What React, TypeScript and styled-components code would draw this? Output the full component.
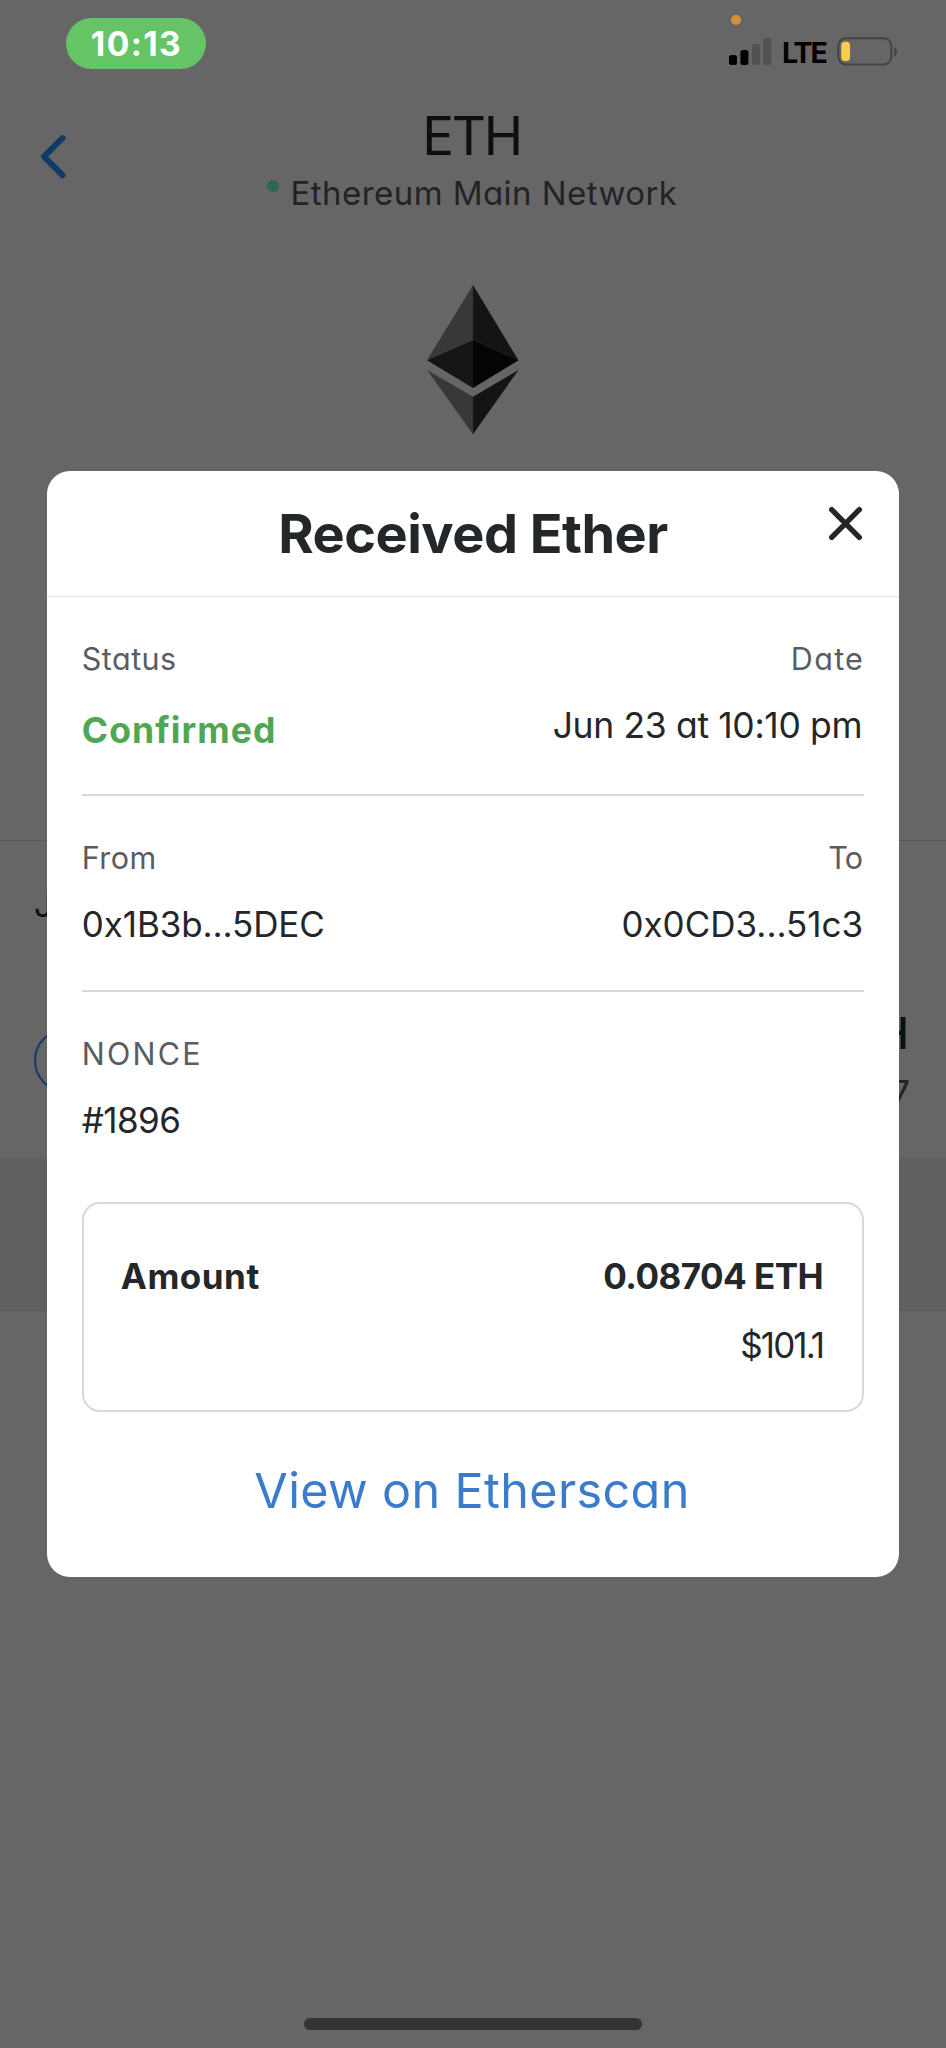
import React from "react";
import styled, { createGlobalStyle } from "styled-components";

const GlobalStyle = createGlobalStyle`
  * { box-sizing: border-box; }
  body {
    margin: 0;
    background: #fff;
    font-family: Inter, "Liberation Sans", sans-serif;
    font-feature-settings: "cv11";
    color: #24272a;
  }
  svg { display: block; flex: none; }
`;

const Screen = styled.div`
  position: relative;
  width: 946px;
  height: 2048px;
  overflow: hidden;
  background: #fff;
`;

/* status bar */
const StatusBar = styled.header`
  position: relative;
  z-index: 2;
  display: flex;
  justify-content: space-between;
  height: 100px;
  padding: 18px 48px 0 66px;
`;

const TimePill = styled.div`
  width: 140px;
  height: 51px;
  border-radius: 26px;
  background: #65c466;
  color: #fff;
  font-size: 33.5px;
  font-weight: 650;
  line-height: 52px;
  letter-spacing: 1.4px;
  text-indent: 1px;
  text-align: center;
`;

const StatusIcons = styled.div`
  position: relative;
  display: flex;
  align-items: flex-start;
  padding-top: 19px;
`;

const RecordingDot = styled.span`
  position: absolute;
  top: -3px;
  left: 2px;
  width: 10px;
  height: 10px;
  border-radius: 50%;
  background: #d9903b;
`;

const Carrier = styled.span`
  width: 55px;
  margin: 1px 0 0 10px;
  color: #000;
  font-size: 28.5px;
  font-weight: 700;
  line-height: 30px;
  letter-spacing: -2px;
`;

/* wallet page */
const NavBar = styled.nav`
  display: grid;
  grid-template-columns: 120px 1fr 120px;
  height: 120px;
  padding-top: 4px;
`;

const BackButton = styled.div`
  padding: 28px 0 0 37px;
`;

const NavTitle = styled.div`
  display: flex;
  flex-direction: column;
  align-items: center;
  padding-right: 2px;
`;

const TokenName = styled.h1`
  margin: 0;
  padding-right: 1px;
  font-size: 53px;
  font-weight: 400;
  line-height: 65px;
  letter-spacing: -2.4px;
`;

const NetworkRow = styled.div`
  display: flex;
  align-items: flex-start;
  gap: 12px;
  color: #535a61;
  font-size: 33px;
  line-height: 49px;
  letter-spacing: 0.44px;
`;

const NetworkDot = styled.span`
  width: 12px;
  height: 12px;
  margin-top: 11px;
  border-radius: 50%;
  background: #70ffd2;
`;

const TokenHero = styled.section`
  display: flex;
  justify-content: center;
  height: 621px;
  padding: 65px 0 0;
  border-bottom: 1px solid #d6d9dc;
`;

const Activity = styled.section`
  height: 317px;
  padding: 44px 37px 0 34px;
`;

const ActivityDate = styled.div`
  font-size: 33px;
  line-height: 40px;
`;

const ActivityRow = styled.div`
  display: flex;
  justify-content: space-between;
  margin-top: 83px;
`;

const ActivityIcon = styled.div`
  width: 65px;
  height: 65px;
  margin-top: 20px;
  border: 2px solid #2b91ff;
  border-radius: 50%;
`;

const ActivityAmount = styled.div`
  text-align: right;
  font-size: 43.5px;
  font-weight: 500;
  line-height: 50px;
`;

const ActivityFiat = styled.div`
  margin-right: -1px;
  color: #535a61;
  font-size: 35px;
  line-height: 70px;
  text-align: right;
`;

const Separator = styled.div`
  height: 153px;
  border-bottom: 1px solid #d6d9dc;
  background: #f0f0f6;
`;

/* transaction dialog */
const Backdrop = styled.div`
  position: absolute;
  inset: 0;
  z-index: 1;
  padding: 471px 47.3px 0;
  background: rgba(0, 0, 0, 0.6);
`;

const Dialog = styled.div`
  height: 1106px;
  overflow: hidden;
  border-radius: 23px;
  background: #fff;
`;

const DialogHeader = styled.div`
  display: grid;
  grid-template-columns: 80px 1fr 80px;
  height: 126px;
  border-bottom: 1px solid #dfe0e3;
`;

const DialogTitle = styled.h2`
  grid-column: 2;
  margin: 0;
  font-size: 54px;
  font-weight: 700;
  line-height: 126px;
  letter-spacing: -0.5px;
  text-align: center;
  white-space: nowrap;
`;

const CloseButton = styled.div`
  padding: 32px 0 0 6px;
`;

const DialogBody = styled.div`
  padding: 0 34.5px;
`;

const Section = styled.div<{ $height: number; $divided?: boolean }>`
  display: flex;
  justify-content: space-between;
  height: ${(p) => p.$height}px;
  padding-top: 42px;
  border-bottom: ${(p) => (p.$divided ? "2px solid #d6d8db" : "none")};
`;

const Field = styled.div<{ $end?: boolean; $gap?: number }>`
  display: flex;
  flex-direction: column;
  align-items: ${(p) => (p.$end ? "flex-end" : "flex-start")};
  gap: ${(p) => p.$gap ?? 24}px;
`;

const Label = styled.span<{ $track: number; $inset?: number }>`
  padding-right: ${(p) => p.$inset ?? 0}px;
  color: #585c63;
  font-size: 30.5px;
  line-height: 40px;
  letter-spacing: ${(p) => p.$track}px;
`;

const Value = styled.span<{ $track: number; $size?: number; $strong?: boolean; $inset?: number }>`
  padding-right: ${(p) => p.$inset ?? 0}px;
  font-size: ${(p) => p.$size ?? 35}px;
  font-weight: ${(p) => (p.$strong ? 700 : 400)};
  line-height: 44px;
  letter-spacing: ${(p) => p.$track}px;
  white-space: nowrap;
`;

const Confirmed = styled(Value)`
  color: #50a652;
`;

const AmountBox = styled.div`
  display: flex;
  justify-content: space-between;
  height: 210px;
  padding: 50px 39px 0 37px;
  border: 2px solid #d6d9dc;
  border-radius: 18px;
`;

const ExplorerLink = styled.div`
  margin-top: 49px;
  padding-right: 2px;
  color: #3a7bcb;
  font-size: 48.5px;
  line-height: 60px;
  letter-spacing: 0.36px;
  text-align: center;
`;

const HomeIndicator = styled.div`
  position: absolute;
  z-index: 2;
  bottom: 18px;
  left: 304px;
  width: 338px;
  height: 12px;
  border-radius: 6px;
  background: #333;
`;

const SignalIcon = () => (
  <svg width="43" height="29" viewBox="0 0 43 29">
    <rect x="0" y="18" width="8" height="10" rx="2.5" fill="#000" />
    <rect x="11.4" y="13" width="8" height="15" rx="2.5" fill="#000" />
    <rect x="23" y="7" width="8" height="21" rx="2.5" fill="#525252" />
    <rect x="34.3" y="1" width="8" height="27" rx="2.5" fill="#525252" />
  </svg>
);

const BatteryIcon = () => (
  <svg width="61" height="29" viewBox="0 0 61 29">
    <rect x="1.3" y="1.3" width="53" height="26.2" rx="7.5" fill="none" stroke="#444" strokeWidth="2" />
    <rect x="4.3" y="4.7" width="8.7" height="19.4" rx="3.5" fill="#f7ce46" />
    <path d="M57 10v9.4c1.8-.8 3-2.6 3-4.7s-1.2-3.9-3-4.7z" fill="#444" />
  </svg>
);

const ChevronLeft = () => (
  <svg width="32" height="50" viewBox="0 0 32 50">
    <path d="M25.5 6.2 7 24.7l18.500 18.500" fill="none" stroke="#2b91ff" strokeWidth="6" strokeLinecap="round" strokeLinejoin="round" />
  </svg>
);

const EtherLogo = () => (
  <svg width="92" height="150" viewBox="0 0 92 150">
    <path d="M46 0 0 75.300 46 55z" fill="#8c8c8c" />
    <path d="M46 0l45.500 75.300L46 55z" fill="#343434" />
    <path d="M46 55 0 75.300 46 103z" fill="#353535" />
    <path d="M46 55l45.500 20.300L46 103z" fill="#0c0c0c" />
    <path d="M0 85l46 26.700v37.600z" fill="#8c8c8c" />
    <path d="M91.500 85 46 111.700v37.600z" fill="#343434" />
  </svg>
);

const CloseIcon = () => (
  <svg width="38" height="38" viewBox="0 0 38 38">
    <path d="M6.700 6.700l27.600 27.600M34.300 6.700 6.700 34.300" fill="none" stroke="#24272a" strokeWidth="5.400" strokeLinecap="round" />
  </svg>
);

export default function App() {
  return (
    <>
      <GlobalStyle />
      <Screen>
        <StatusBar>
          <TimePill>10:13</TimePill>
          <StatusIcons>
            <RecordingDot />
            <SignalIcon />
            <Carrier>LTE</Carrier>
            <BatteryIcon />
          </StatusIcons>
        </StatusBar>

        <NavBar>
          <BackButton>
            <ChevronLeft />
          </BackButton>
          <NavTitle>
            <TokenName>ETH</TokenName>
            <NetworkRow>
              <NetworkDot />
              Ethereum Main Network
            </NetworkRow>
          </NavTitle>
        </NavBar>
        <TokenHero>
          <EtherLogo />
        </TokenHero>
        <Activity>
          <ActivityDate>J</ActivityDate>
          <ActivityRow>
            <ActivityIcon />
            <div>
              <ActivityAmount>H</ActivityAmount>
              <ActivityFiat>7</ActivityFiat>
            </div>
          </ActivityRow>
        </Activity>
        <Separator />

        <Backdrop>
          <Dialog>
            <DialogHeader>
              <DialogTitle>Received Ether</DialogTitle>
              <CloseButton>
                <CloseIcon />
              </CloseButton>
            </DialogHeader>
            <DialogBody>
              <Section $height={199} $divided>
                <Field $gap={30}>
                  <Label $track={0.47}>Status</Label>
                  <Confirmed $strong $size={35.5} $track={1.1}>Confirmed</Confirmed>
                </Field>
                <Field $end $gap={25}>
                  <Label $track={1.3}>Date</Label>
                  <Value $size={35.5} $track={-0.35} $inset={2}>Jun 23 at 10:10 pm</Value>
                </Field>
              </Section>
              <Section $height={196} $divided>
                <Field>
                  <Label $track={0.44}>From</Label>
                  <Value $track={-0.1}>0x1B3b...5DEC</Value>
                </Field>
                <Field $end>
                  <Label $track={-0.8} $inset={2}>To</Label>
                  <Value $track={0} $inset={1}>0x0CD3...51c3</Value>
                </Field>
              </Section>
              <Section $height={210}>
                <Field>
                  <Label $track={2.2}>NONCE</Label>
                  <Value $track={-0.6}>#1896</Value>
                </Field>
              </Section>
              <AmountBox>
                <Value $strong $track={0.5}>Amount</Value>
                <Field $end $gap={25}>
                  <Value $strong $track={-0.53}>0.08704 ETH</Value>
                  <Value $track={-1.9}>$101.1</Value>
                </Field>
              </AmountBox>
              <ExplorerLink>View on Etherscan</ExplorerLink>
            </DialogBody>
          </Dialog>
        </Backdrop>
        <HomeIndicator />
      </Screen>
    </>
  );
}
